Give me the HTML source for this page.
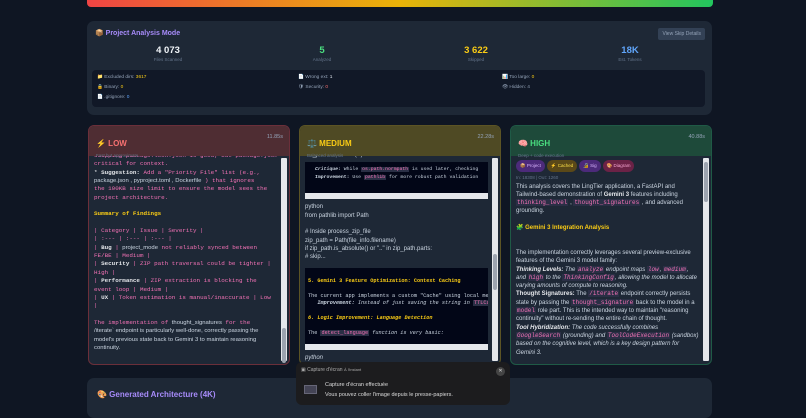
<!DOCTYPE html>
<html><head><meta charset="utf-8"><style>
*{box-sizing:border-box;margin:0;padding:0}
body{width:806px;height:407px;overflow:hidden;background:#0f1623;font-family:"Liberation Sans",sans-serif;color:#cbd5e1;position:relative}
.bar{position:absolute;left:87px;top:0;width:626px;height:7px;border-radius:0 0 4px 4px;background:linear-gradient(90deg,#ef4444,#eab308 50%,#22c55e)}
.panel{position:absolute;left:87px;top:21px;width:625px;height:94px;background:#1e2836;border-radius:7px}
.ptitle{position:absolute;left:8px;top:8px;font-size:7px;font-weight:bold;color:#a78bfa}
.btn{position:absolute;right:7px;top:7px;font-size:5px;color:#94a3b8;background:#334155;padding:3px 4px;border-radius:2px}
.stat{position:absolute;top:24px;width:100px;text-align:center}
.stat b{display:block;font-size:9.5px}
.stat span{display:block;font-size:4.5px;color:#64748b;margin-top:1px}
.inner{position:absolute;left:5px;top:49px;width:613px;height:37px;background:#111827;border-radius:4px;font-size:4.8px;color:#94a3b8}
.inner div{position:absolute}
.card{position:absolute;top:125px;width:202px;height:240px;border-radius:6px;background:#1e2836;overflow:hidden;border:1px solid}
.hd{height:30px;padding:7px 7px;position:relative}
.hd b{font-size:8px}
.hd i{position:absolute;right:6px;top:8px;font-style:normal;font-size:5.5px;color:#94a3b8}
.hd small{display:block;font-size:4.5px;color:#64748b;margin-top:2px}
.bd{position:absolute;left:5px;right:12px;top:30px;bottom:0;overflow:hidden;font-size:5.7px;line-height:8.35px}
.sb{position:absolute;right:2px;top:32px;width:6px;bottom:3px;background:#e5e7eb;border-radius:1px}
.sb div{position:absolute;left:1px;width:4px;background:#9ca3af;border-radius:2px}
.m{font-family:"Liberation Mono",monospace;font-size:5.9px}
.m div{white-space:nowrap}
.pk{color:#f472b6}.w{color:#e5e7eb}.y{color:#facc15}
.code{background:#020617;margin:3px 0;padding:3px 5px;font-family:"Liberation Mono",monospace;font-size:4.8px;line-height:7.5px;white-space:nowrap;overflow:hidden;color:#cbd5e1}
.hs{background:#e5e7eb;height:6px;margin:-3px 0 4px}
.tag{display:inline-block;font-size:4.5px;padding:2px 4px;border-radius:6px;margin-right:2px}
.c{font-family:"Liberation Mono",monospace;color:#f472b6;background:#2a2f45;padding:0 1px}
.bottom{position:absolute;left:87px;top:378px;width:625px;height:40px;background:#1e2836;border-radius:7px}
.toast{position:absolute;left:296px;top:362px;width:214px;height:43px;background:#1c1c1e;border-radius:6px;color:#ddd}
</style></head><body>
<div class="bar"></div>
<div class="panel">
<div class="ptitle">📦 Project Analysis Mode</div>
<div class="btn">View Skip Details</div>
<div class="stat" style="left:31px"><b style="color:#f1f5f9">4 073</b><span>Files Scanned</span></div>
<div class="stat" style="left:185px"><b style="color:#4ade80">5</b><span>Analyzed</span></div>
<div class="stat" style="left:339px"><b style="color:#facc15">3 622</b><span>Skipped</span></div>
<div class="stat" style="left:493px"><b style="color:#60a5fa">18K</b><span>Est. Tokens</span></div>
<div class="inner">
<div style="left:5px;top:5px">📁 Excluded dirs: <span class="y">3617</span></div>
<div style="left:206px;top:5px">📄 Wrong ext: <span style="color:#e2e8f0">1</span></div>
<div style="left:410px;top:5px">📊 Too large: <span class="y">0</span></div>
<div style="left:5px;top:15px">🔒 Binary: <span class="y">0</span></div>
<div style="left:206px;top:15px">🛡 Security: <span style="color:#f87171">0</span></div>
<div style="left:410px;top:15px">👁 Hidden: 4</div>
<div style="left:5px;top:25px">📄 .gitignore: <span style="color:#60a5fa">0</span></div>
</div></div>

<div class="card" style="left:88px;border-color:#6b2f3a">
<div class="hd" style="background:#4f2d33"><b style="color:#f87171">⚡ LOW</b><i>11.85s</i><small>Fast but approximate</small></div>
<div class="bd m pk">
<div style="margin-top:-4px">skipping package.lock.json is good, but package.json is</div>
<div>critical for context.</div>
<div><span class="w">* <b>Suggestion:</b></span> Add a "Priority File" list (e.g.,</div>
<div><span style="font-family:Liberation Sans;color:#cbd5e1">package.json , pyproject.toml , Dockerfile</span> ) that ignores</div>
<div>the 100KB size limit to ensure the model sees the</div>
<div>project architecture.</div>
<div>&nbsp;</div>
<div class="y"><b>Summary of Findings</b></div>
<div>&nbsp;</div>
<div>| Category | Issue | Severity |</div>
<div>| :--- | :--- | :--- |</div>
<div>| <b class="w">Bug</b> | <span style="font-family:Liberation Sans;color:#cbd5e1">project_mode</span> not reliably synced between</div>
<div>FE/BE | Medium |</div>
<div>| <b class="w">Security</b> | ZIP path traversal could be tighter |</div>
<div>High |</div>
<div>| <b class="w">Performance</b> | ZIP extraction is blocking the</div>
<div>event loop | Medium |</div>
<div>| <b class="w">UX</b> | Token estimation is manual/inaccurate | Low</div>
<div>|</div>
<div>&nbsp;</div>
<div>The implementation of <span style="font-family:Liberation Sans;color:#cbd5e1">thought_signatures</span> for the</div>
<div style="font-family:Liberation Sans;color:#cbd5e1">/iterate` endpoint is particularly well-done, correctly passing the</div>
<div style="font-family:Liberation Sans;color:#cbd5e1">model's previous state back to Gemini 3 to maintain reasoning</div>
<div style="font-family:Liberation Sans;color:#cbd5e1">continuity.</div>
</div>
<div class="sb"><div style="top:170px;height:35px"></div></div>
</div>

<div class="card" style="left:299px;border-color:#5c5424">
<div class="hd" style="background:#4f4a24"><b style="color:#facc15">⚖️ MEDIUM</b><i>22.28s</i><small>Balanced analysis</small></div>
<div class="bd" style="font-size:6px">
<div style="margin-top:-5px">file_path.startswith('/'):</div>
<div class="code" style="padding:4px 10px 12px"><div><b><i>Critique:</i></b> While <span class="c">os.path.normpath</span> is used later, checking</div><div><b>Improvement:</b> Use <span class="c">pathlib</span> for more robust path validation</div></div>
<div class="hs"></div>
<div>python</div><div>from pathlib import Path</div><div>&nbsp;</div>
<div># Inside process_zip_file</div><div>zip_path = Path(file_info.filename)</div>
<div>if zip_path.is_absolute() or ".." in zip_path.parts:</div><div># skip...</div>
<div class="code" style="padding:10px 3px 6px;margin-top:6px;font-size:5.2px"><div class="y"><b>5. Gemini 3 Feature Optimization: Context Caching</b></div><div>&nbsp;</div><div>The current app implements a custom "Cache" using local mem</div><div>&nbsp;&nbsp;&nbsp;<b><i>Improvement:</i></b> <i>Instead of just saving the string in</i> <span class="c">TTLCa</span></div><div>&nbsp;</div><div class="y"><b><i>6. Logic Improvement: Language Detection</i></b></div><div>&nbsp;</div><div>The <span class="c">detect_language</span> <i>function is very basic:</i></div></div>
<div class="hs"></div>
<div><i>python</i></div>
</div>
<div class="sb"><div style="top:96px;height:36px"></div></div>
</div>

<div class="card" style="left:510px;border-color:#1f5a46">
<div class="hd" style="background:#1e4a3a"><b style="color:#4ade80">🧠 HIGH</b><i>40.88s</i><small>Deep + code execution</small></div>
<div class="bd" style="font-size:6px;line-height:8.3px;top:34px">
<div><span class="tag" style="background:#4c2a7a;color:#d8b4fe">📦 Project</span><span class="tag" style="background:#5a4818;color:#fde047">⚡ Cached</span><span class="tag" style="background:#4c2a7a;color:#d8b4fe">🔏 Sig</span><span class="tag" style="background:#6b2246;color:#f9a8d4">🎨 Diagram</span></div>
<div style="font-size:4.5px;color:#64748b;margin-top:2px">In: 18308 | Out: 1260</div>
<div>This analysis covers the LingTier application, a FastAPI and Tailwind-based demonstration of <b class="w">Gemini 3</b> features including <span class="c">thinking_level</span> , <span class="c">thought_signatures</span> , and advanced grounding.</div>
<div>&nbsp;</div>
<div class="y" style="font-weight:bold">🧩 Gemini 3 Integration Analysis</div>
<div>&nbsp;</div><div>&nbsp;</div>
<div>The implementation correctly leverages several preview-exclusive features of the Gemini 3 model family:</div>
<div><i><b class="w">Thinking Levels:</b> The <span class="c">analyze</span> endpoint maps <span class="c">low</span>, <span class="c">medium</span>, and <span class="c">high</span> to the <span class="c">ThinkingConfig</span>, allowing the model to allocate varying amounts of compute to reasoning.</i></div>
<div><b class="w">Thought Signatures:</b> The <span class="c">/iterate</span> endpoint correctly persists state by passing the <span class="c">thought_signature</span> back to the model in a <span class="c">model</span> role part. This is the intended way to maintain "reasoning continuity" without re-sending the entire chain of thought.</div>
<div><i><b class="w">Tool Hybridization:</b> The code successfully combines <span class="c">GoogleSearch</span> (grounding) and <span class="c">ToolCodeExecution</span> (sandbox) based on the cognitive level, which is a key design pattern for Gemini 3.</i></div>
</div>
<div class="sb"><div style="top:4px;height:40px"></div></div>
</div>

<div class="bottom"><div style="position:absolute;left:10px;top:12px;font-size:8px;font-weight:bold;color:#a78bfa">🎨 Generated Architecture (4K)</div></div>

<div class="toast">
<div style="position:absolute;left:5px;top:5px;font-size:5px;color:#aaa">▣ Capture d'écran <span style="font-size:4px">À l'instant</span></div>
<div style="position:absolute;right:5px;top:5px;width:9px;height:9px;border-radius:50%;background:#444;color:#ddd;font-size:5px;text-align:center;line-height:9px">✕</div>
<div style="position:absolute;left:8px;top:23px;width:13px;height:9px;background:#445;border:1px solid #667"></div>
<div style="position:absolute;left:29px;top:18px;font-size:5.5px;line-height:10px">Capture d'écran effectuée<br>Vous pouvez coller l'image depuis le presse-papiers.</div>
</div>
</body></html>
